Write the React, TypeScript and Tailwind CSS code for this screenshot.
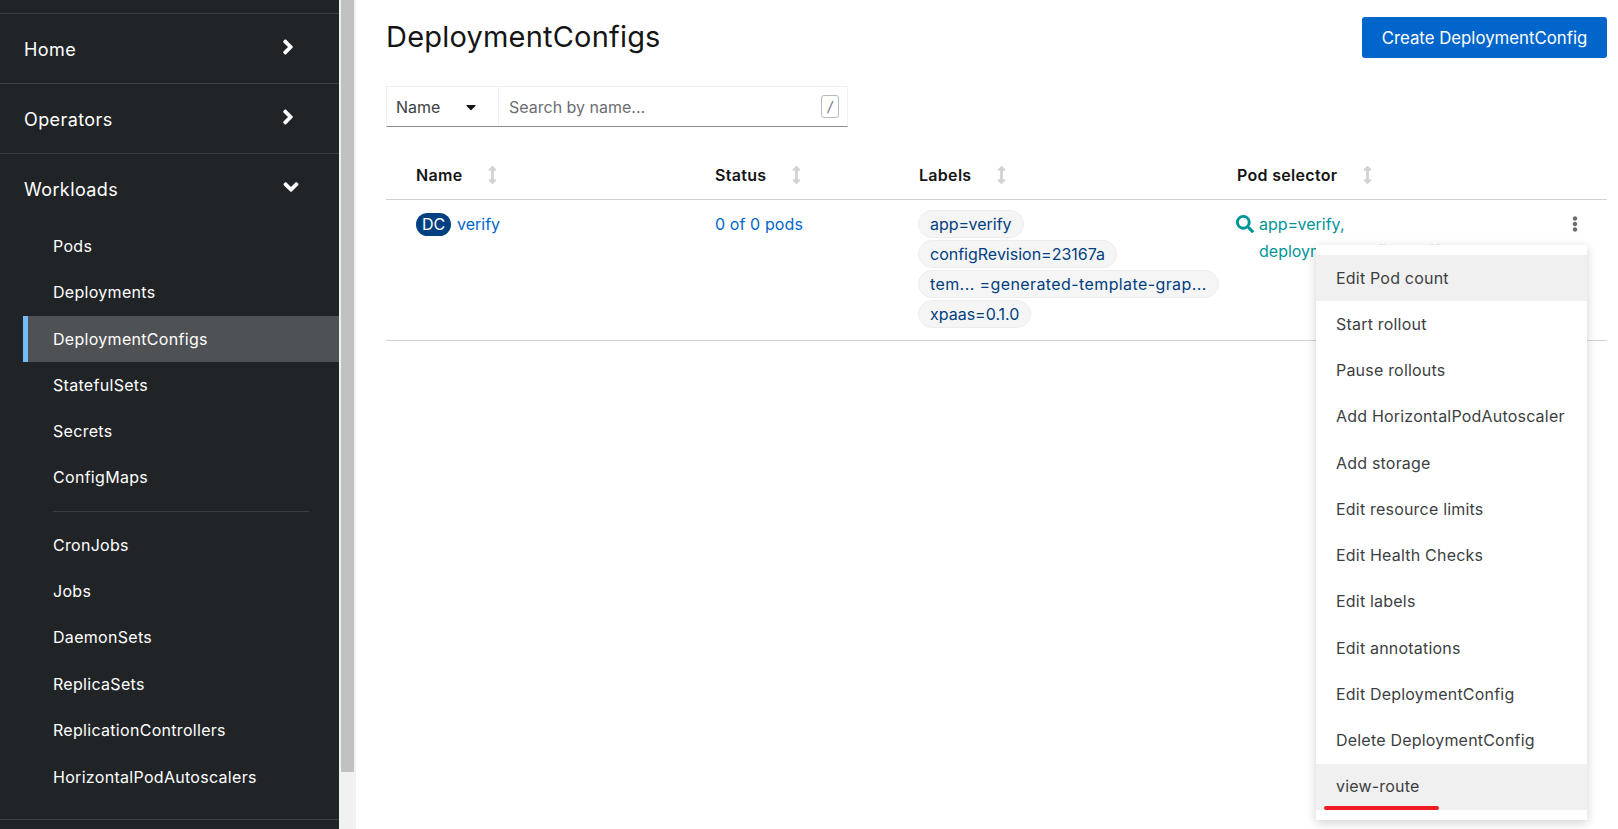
import { FaAngleDown, FaAngleRight, FaArrowsAltV, FaCaretDown, FaEllipsisV, FaSearch } from "react-icons/fa";

const upperItems = ["Pods", "Deployments", "DeploymentConfigs", "StatefulSets", "Secrets", "ConfigMaps"];
const lowerItems = ["CronJobs", "Jobs", "DaemonSets", "ReplicaSets", "ReplicationControllers", "HorizontalPodAutoscalers"];
const menuItems = [
  "Edit Pod count",
  "Start rollout",
  "Pause rollouts",
  "Add HorizontalPodAutoscaler",
  "Add storage",
  "Edit resource limits",
  "Edit Health Checks",
  "Edit labels",
  "Edit annotations",
  "Edit DeploymentConfig",
  "Delete DeploymentConfig",
  "view-route",
];
const labels = ["app=verify", "configRevision=23167a", "tem... =generated-template-grap...", "xpaas=0.1.0"];

function NavGroup({ title }: { title: string }) {
  return (
    <div className="flex h-[70px] items-center justify-between border-b border-[#3c3f42] pl-6 pr-[39px] pt-px text-[18px] tracking-[0.4px] text-white">
      <span>{title}</span>
      <FaAngleRight className="-mt-[5px] text-[24px]" />
    </div>
  );
}

function SortHeader({ title }: { title: string }) {
  return (
    <div className="flex items-center gap-[26px] pl-[30px] text-[16px] font-semibold tracking-[0.3px] text-[#151515]">
      <span>{title}</span>
      <FaArrowsAltV className="h-[18px] w-[9px] shrink-0 text-[#d2d2d2]" />
    </div>
  );
}

export default function App() {
  return (
    <div className="flex h-[829px] w-[1618px] overflow-hidden bg-white font-['Inter',sans-serif]">
      <aside className="h-full w-[339px] shrink-0 bg-[#212427] pt-[13px]">
        <div className="border-t border-[#3c3f42]" />
        <NavGroup title="Home" />
        <NavGroup title="Operators" />
        <div className="flex h-[69px] items-center justify-between pl-6 pr-[36px] pt-px text-[18px] tracking-[0.4px] text-white">
          <span>Workloads</span>
          <FaAngleDown className="-mt-[5px] text-[24px]" />
        </div>
        <ul className="text-[16px] tracking-[0.3px] text-white">
          {upperItems.map((item) => (
            <li
              key={item}
              className={
                item === "DeploymentConfigs"
                  ? "ml-[23px] flex h-[46.25px] items-center border-l-[5px] border-[#73bcf7] bg-[#4f5255] pl-[25px]"
                  : "flex h-[46.25px] items-center pl-[53px]"
              }
            >
              {item}
            </li>
          ))}
        </ul>
        <div className="mb-[10px] ml-[53px] mt-[10px] h-px w-[256px] bg-[#3c3f42]" />
        <ul className="text-[16px] tracking-[0.3px] text-white">
          {lowerItems.map((item) => (
            <li key={item} className="flex h-[46.4px] items-center pl-[53px]">
              {item}
            </li>
          ))}
        </ul>
        <div className="mt-[19px] border-t border-[#3c3f42]" />
      </aside>

      <div className="h-full w-[17px] shrink-0 bg-[#f1f1f1] px-[2px]">
        <div className="h-[772px] bg-[#c1c1c1]" />
      </div>

      <main className="relative flex-1 pl-[30px] pr-[11px]">
        <div className="flex h-[86px] items-start justify-between pt-[17px]">
          <h1 className="pt-[1px] text-[29px] leading-[38px] tracking-[0.2px] text-[#151515]">DeploymentConfigs</h1>
          <button type="button" className="h-[41px] w-[245px] rounded-[3px] bg-[#06c] pt-[2px] text-[16.8px] text-white">
            Create DeploymentConfig
          </button>
        </div>

        <div className="flex h-[41px] w-[462px] border border-[#f0f0f0] border-b-[#8a8d90] text-[16px]">
          <div className="flex w-[112px] items-center justify-between border-r border-[#f0f0f0] pl-[9px] pr-[19px] text-[#3c3f42]">
            <span>Name</span>
            <FaCaretDown className="text-[16px] text-[#151515]" />
          </div>
          <div className="flex flex-1 items-center justify-between pl-[10px] pr-[8px] text-[#6a6e73]">
            <span>Search by name...</span>
            <span className="flex h-[23px] w-[18px] items-center justify-center rounded-[3px] border border-[#b8bbbe] text-[14px] italic">
              /
            </span>
          </div>
        </div>

        <div className="mt-[24px] grid h-[49px] grid-cols-[299px_204px_318px_1fr] items-center border-b border-[#d2d2d2] pb-px">
          <SortHeader title="Name" />
          <SortHeader title="Status" />
          <SortHeader title="Labels" />
          <SortHeader title="Pod selector" />
        </div>

        <div className="grid h-[141px] grid-cols-[299px_204px_318px_1fr] border-b border-[#d2d2d2] pt-[10px] text-[16px]">
          <div className="flex h-[28px] items-center pl-[30px]">
            <span className="flex h-[23px] w-[35px] items-center justify-center rounded-full bg-[#004080] text-white">
              DC
            </span>
            <span className="ml-[6px] text-[#06c]">verify</span>
          </div>
          <div className="flex h-[28px] items-center pl-[30px] tracking-[0.1px] text-[#06c]">0 of 0 pods</div>
          <div className="flex flex-col items-start gap-[2px] pl-[29px]">
            {labels.map((label, index) => (
              <span
                key={label}
                className={
                  index === 2
                    ? "flex h-[28px] items-center whitespace-nowrap rounded-full border border-[#ededed] bg-[#f5f5f5] px-[11px] tracking-[0.4px] text-[#004080]"
                    : "flex h-[28px] items-center whitespace-nowrap rounded-full border border-[#ededed] bg-[#f5f5f5] px-[11px] text-[#004080]"
                }
              >
                {label}
              </span>
            ))}
          </div>
          <div className="flex items-start justify-between pl-[29px] text-[#009596]">
            <div className="flex">
              <FaSearch className="mr-[5px] mt-[5px] text-[18px]" />
              <div className="pt-px leading-[27px]">
                app=verify,
                <br />
                deploymentconfig=verify
              </div>
            </div>
            <FaEllipsisV className="mr-[24px] mt-[6px] text-[16px] text-[#6a6e73]" />
          </div>
        </div>

        <div className="absolute left-[960px] top-[245px] w-[271px] bg-white py-[10px] text-[16px] tracking-[0.2px] shadow-[0_3px_10px_rgba(3,3,3,0.18)]">
          {menuItems.map((item, index) => (
            <div
              key={item}
              className={
                index === 0 || index === 11
                  ? "relative flex h-[46.25px] items-center bg-[#f0f0f0] pb-px pl-[20px] text-[#3c3f42]"
                  : "flex h-[46.25px] items-center pb-px pl-[20px] text-[#3c3f42]"
              }
            >
              {item}
              {index === 11 ? (
                <span className="absolute bottom-0 left-[8px] h-[4px] w-[115px] rounded-full bg-[#ed1c24]" />
              ) : null}
            </div>
          ))}
        </div>
      </main>
    </div>
  );
}
